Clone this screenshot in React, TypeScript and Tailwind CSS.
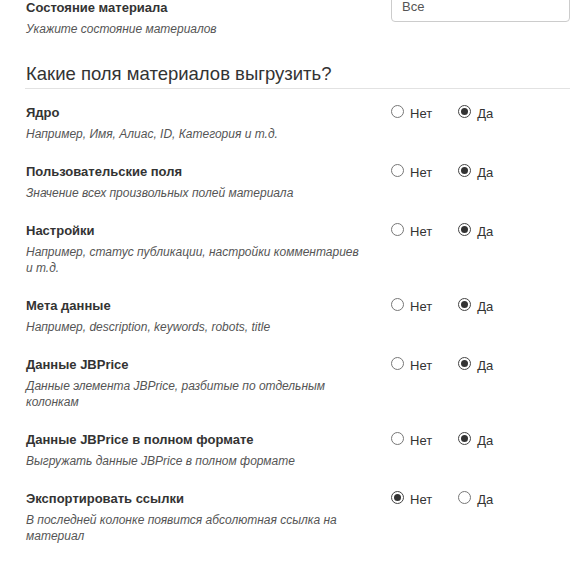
import React from 'react';

interface Field {
  label: string;
  hint: string;
  value: 'no' | 'yes';
}

const fields: Field[] = [
  { label: 'Ядро', hint: 'Например, Имя, Алиас, ID, Категория и т.д.', value: 'yes' },
  { label: 'Пользовательские поля', hint: 'Значение всех произвольных полей материала', value: 'yes' },
  { label: 'Настройки', hint: 'Например, статус публикации, настройки комментариев и т.д.', value: 'yes' },
  { label: 'Мета данные', hint: 'Например, description, keywords, robots, title', value: 'yes' },
  { label: 'Данные JBPrice', hint: 'Данные элемента JBPrice, разбитые по отдельным колонкам', value: 'yes' },
  { label: 'Данные JBPrice в полном формате', hint: 'Выгружать данные JBPrice в полном формате', value: 'yes' },
  { label: 'Экспортировать ссылки', hint: 'В последней колонке появится абсолютная ссылка на материал', value: 'no' },
];

function Radio({ checked, label }: { checked: boolean; label: string }) {
  return (
    <label className="flex items-start gap-[6px] text-[13px] leading-[18px] text-[#333]">
      <span
        className={`mt-[1px] flex h-[13px] w-[13px] items-center justify-center rounded-full border bg-white ${
          checked ? 'border-[#444]' : 'border-[#777]'
        }`}
      >
        {checked && <span className="h-[7px] w-[7px] rounded-full bg-[#333]" />}
      </span>
      <span className="mt-[1px]">{label}</span>
    </label>
  );
}

export default function App() {
  return (
    <div
      className="min-h-[566px] overflow-hidden bg-white pl-[26px] text-[#333]"
      style={{ fontFamily: '"Liberation Sans", Arial, sans-serif' }}
    >
      {/* Material state */}
      <div className="-mt-[1px] flex items-start">
        <div className="w-[365px]">
          <div className="text-[13px] font-bold leading-[18px]">Состояние материала</div>
          <div className="mt-[4px] text-[12px] italic leading-[16px] text-[#555]">
            Укажите состояние материалов
          </div>
        </div>
        <div className="-mt-[7px] flex h-[30px] flex-1 items-center rounded-[4px] border border-[#ccc] pl-[10px] text-[13px] text-[#555]">
          Все
        </div>
      </div>

      <h3 className="mt-[27px] text-[18.5px] font-normal leading-[20px] text-[#333]">
        Какие поля материалов выгрузить?
      </h3>
      <hr className="mt-[4px] border-0 border-t border-[#e2e2e2]" style={{ marginLeft: -1 }} />

      <div className="mt-[15px]">
        {fields.map((f) => (
          <div key={f.label} className="mb-[21px] flex items-start">
            <div className="w-[365px]">
              <div className="text-[13px] font-bold leading-[18px]">{f.label}</div>
              <div className="mt-[4px] w-[340px] text-[12px] italic leading-[16px] text-[#555]">
                {f.hint}
              </div>
            </div>
            <div className="flex gap-[26px]">
              <Radio checked={f.value === 'no'} label="Нет" />
              <Radio checked={f.value === 'yes'} label="Да" />
            </div>
          </div>
        ))}
      </div>
    </div>
  );
}
